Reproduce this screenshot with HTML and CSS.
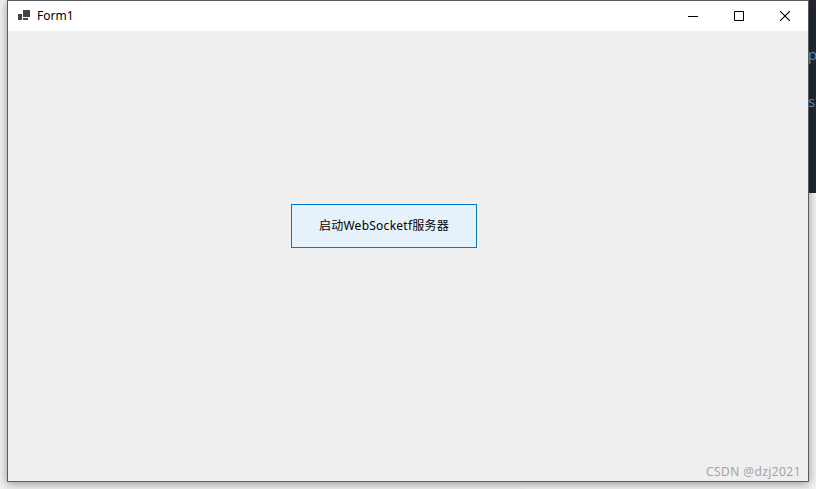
FILE: index.html
```html
<!DOCTYPE html>
<html lang="zh">
<head>
<meta charset="utf-8">
<title>Form1</title>
<link rel="stylesheet" href="styles.css">
</head>
<body>
<div class="desktop">
  <div class="backdrop-dark"></div>
  <div class="backdrop-low"></div>
  <div class="window">
    <header class="titlebar">
      <svg class="app-icon" width="12" height="10" viewBox="0 0 12 10"><path fill="#444" d="M5 0h7v7H5zM0 4h4v6H0zM5 8h5v2H5z"/></svg>
      <span class="title">Form1</span>
      <div class="controls">
        <div class="ctl"><svg width="10" height="10" viewBox="0 0 10 10"><path stroke="#000" d="M0 5.500h10"/></svg></div>
        <div class="ctl"><svg width="10" height="10" viewBox="0 0 10 10"><path fill="none" stroke="#000" d="M.5.500h9v9h-9z"/></svg></div>
        <div class="ctl"><svg width="10" height="10" viewBox="0 0 10 10"><path fill="none" stroke="#000" stroke-width="1.100" d="M0 0l10 10M10 0L0 10"/></svg></div>
      </div>
    </header>
    <main class="client">
      <button class="start"><span class="start-label">启动WebSocketf服务器</span></button>
    </main>
  </div>
  <span class="peek peek-p">p</span>
  <span class="peek peek-s">s</span>
  <div class="watermark">CSDN @dzj2021</div>
</div>
</body>
</html>
```
FILE: styles.css
```css
html, body {
  margin: 0;
  padding: 0;
  height: 100%;
  overflow: hidden;
}
.desktop {
  position: relative;
  width: 816px;
  height: 489px;
  overflow: hidden;
  background: #f1f1f1;
  font-family: "Noto Sans CJK SC", "Noto Sans", sans-serif;
}
.backdrop-dark {
  position: absolute;
  left: 571px;
  top: 0;
  width: 245px;
  height: 193px;
  background: #23272f;
}
.peek {
  position: absolute;
  left: 808px;
  color: #4d8ac4;
  font-size: 15px;
  line-height: 18px;
  font-family: "Open Sans", sans-serif;
}
.peek-p { top: 45px; }
.peek-s { top: 92px; }
.backdrop-low {
  position: absolute;
  left: 525px;
  top: 481px;
  width: 291px;
  height: 8px;
  background: #f3f3f3;
}
.window {
  position: absolute;
  left: 7px;
  top: 0;
  width: 800px;
  height: 480px;
  border: 1px solid #5c5c5c;
  background: #efefef;
  display: flex;
  flex-direction: column;
  box-shadow: 0 2px 9px rgba(0, 0, 0, 0.38);
}
.titlebar {
  height: 30px;
  flex: none;
  background: #fff;
  display: flex;
  align-items: center;
  padding-left: 10px;
}
.app-icon {
  margin-right: 7px;
  margin-top: -2px;
}
.title {
  font-size: 12px;
  font-family: "Noto Sans", sans-serif;
  color: #000;
  margin-top: -1px;
}
.controls {
  margin-left: auto;
  display: flex;
}
.ctl {
  width: 46px;
  height: 30px;
  display: flex;
  align-items: center;
  justify-content: center;
}
.client {
  flex: 1;
  position: relative;
  background: #efefef;
}
.start {
  position: absolute;
  left: 283px;
  top: 173px;
  width: 186px;
  height: 44px;
  box-sizing: border-box;
  border: 1px solid #0078d7;
  background: #e5f1fb;
  color: #000;
  padding: 0 0 2px;
  font: 12px "Noto Sans", "Noto Sans CJK SC", sans-serif;
  letter-spacing: 0.25px;
}
.start-label {
  display: block;
}
.watermark {
  position: absolute;
  right: 15px;
  top: 464px;
  font: 12px/16px "Open Sans", sans-serif;
  color: #a0a0a0;
  letter-spacing: 0.45px;
}
```
